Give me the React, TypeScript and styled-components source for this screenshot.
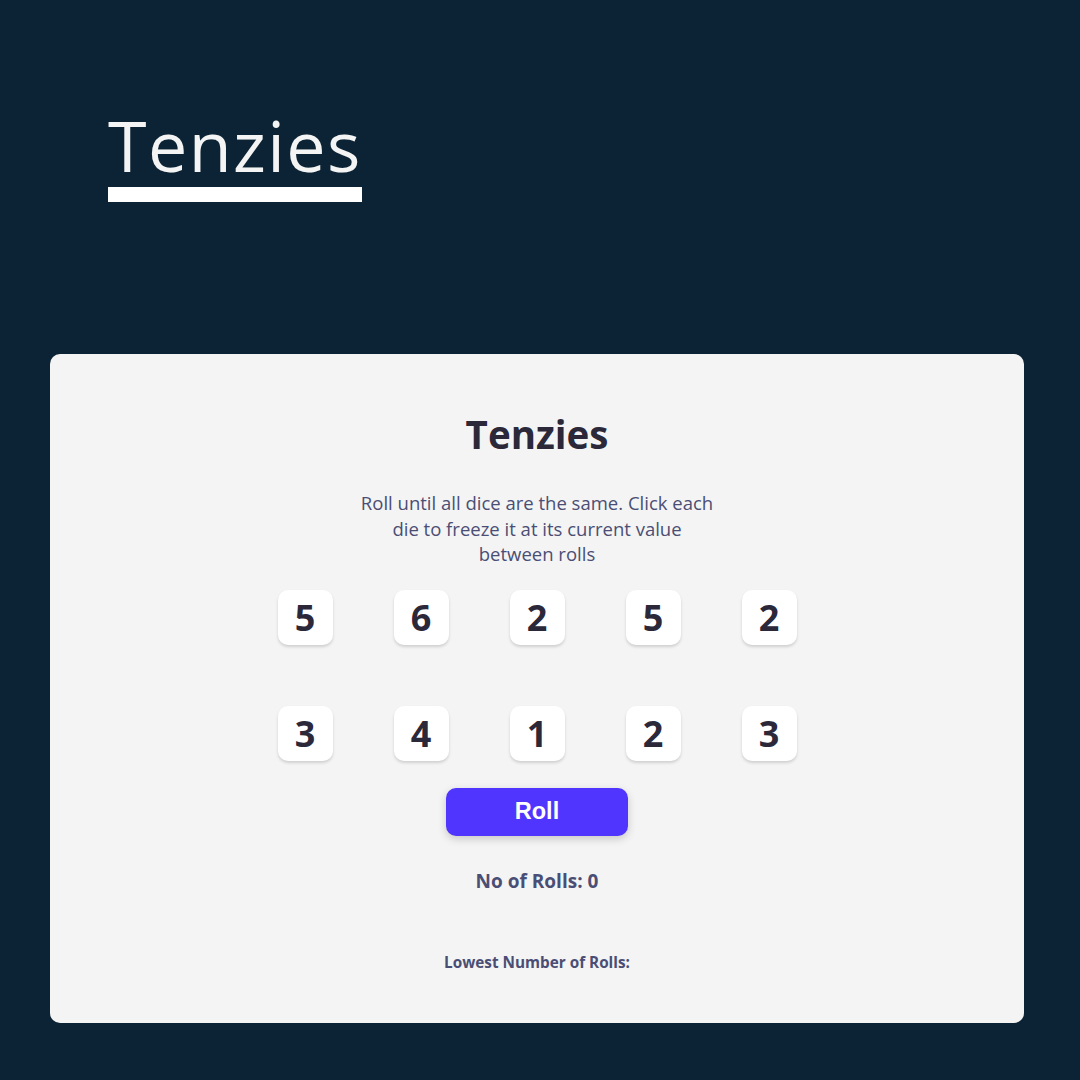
import styled, { createGlobalStyle } from "styled-components";

const GlobalStyle = createGlobalStyle`
    body {
        margin: 0;
        background: #0b2334;
        font-family: "Open Sans", "Noto Sans", sans-serif;
    }
`;

const Page = styled.div`
    width: 1080px;
    height: 1080px;
    box-sizing: border-box;
    padding: 106px 56px 0 50px;
    display: flex;
    flex-direction: column;
`;

const Brand = styled.h1`
    margin: 0 0 0 58px;
    align-self: flex-start;
    color: #f4f4f4;
    font-family: "Open Sans", "Noto Sans", sans-serif;
    font-weight: 400;
    font-size: 70px;
    line-height: 78px;
    letter-spacing: 1.4px;
    padding-bottom: 3px;
    border-bottom: 15px solid #ffffff;
`;

const Board = styled.main`
    margin-top: 152px;
    width: 974px;
    height: 669px;
    box-sizing: border-box;
    background: #f4f4f4;
    border-radius: 10px;
    display: flex;
    flex-direction: column;
    align-items: center;
    padding-top: 50px;
`;

const Title = styled.h2`
    margin: 0;
    color: #2b283a;
    font-size: 38.5px;
    font-weight: 700;
    line-height: 60px;
`;

const Instructions = styled.p`
    margin: 26px 0 0;
    width: 362px;
    text-align: center;
    color: #4a4e74;
    font-size: 18.5px;
    line-height: 25.5px;
`;

const DiceGrid = styled.div`
    margin-top: 23px;
    display: grid;
    grid-template-columns: repeat(5, 55px);
    column-gap: 61px;
    row-gap: 61px;
`;

const Die = styled.div<{ held?: boolean }>`
    width: 55px;
    height: 55px;
    border-radius: 10px;
    background: ${(props) => (props.held ? "#59e391" : "#ffffff")};
    box-shadow: 0 2px 3px rgba(0, 0, 0, 0.15);
    display: flex;
    align-items: center;
    justify-content: center;
    color: #2b283a;
    font-size: 36px;
    font-weight: 700;
`;

const RollButton = styled.button`
    margin-top: 27px;
    width: 182px;
    height: 48px;
    border: none;
    border-radius: 10px;
    background: #5035ff;
    color: #ffffff;
    font-family: "Liberation Sans", Arial, sans-serif;
    font-size: 23.5px;
    font-weight: 700;
    box-shadow: 0 3px 8px rgba(0, 0, 0, 0.18);
    cursor: pointer;
`;

const Stat = styled.p<{ small?: boolean }>`
    margin: ${(props) => (props.small ? "58px 0 0" : "32px 0 0")};
    color: #4a4e74;
    font-size: ${(props) => (props.small ? "15.3px" : "19px")};
    font-weight: 700;
`;

const dice = [5, 6, 2, 5, 2, 3, 4, 1, 2, 3];

export default function App() {
    return (
        <>
            <GlobalStyle />
            <Page>
                <Brand>Tenzies</Brand>
                <Board>
                    <Title>Tenzies</Title>
                    <Instructions>
                        Roll until all dice are the same. Click each die to
                        freeze it at its current value between rolls
                    </Instructions>
                    <DiceGrid>
                        {dice.map((value, i) => (
                            <Die key={i}>{value}</Die>
                        ))}
                    </DiceGrid>
                    <RollButton>Roll</RollButton>
                    <Stat>No of Rolls: 0</Stat>
                    <Stat small>Lowest Number of Rolls:</Stat>
                </Board>
            </Page>
        </>
    );
}
